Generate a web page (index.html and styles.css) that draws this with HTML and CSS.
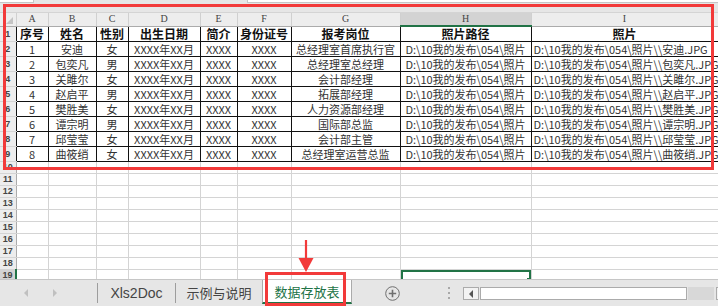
FILE: index.html
```html
<!DOCTYPE html>
<html lang="zh-CN">
<head>
  <meta charset="UTF-8">
  <meta name="viewport" content="width=device-width, initial-scale=1.0">
  <title>数据存放表</title>
  <link rel="stylesheet" href="styles.css">
</head>
<body>

  <div class="app">
    <div class="formula">
      <div class="name-box"></div>
      <div class="fx-box"></div>
    </div>

    <div class="sheet">
      <table class="grid" id="grid">
        <colgroup>
          <col class="w-rh"><col class="w-a"><col class="w-b"><col class="w-c"><col class="w-d">
          <col class="w-e"><col class="w-f"><col class="w-g"><col class="w-h"><col class="w-i">
        </colgroup>
        <tr class="col-head">
          <th class="corner"><span class="tri"></span></th>
          <th>A</th><th>B</th><th>C</th><th>D</th><th>E</th><th>F</th><th>G</th><th class="sel">H</th><th>I</th>
        </tr>
        <tr class="row-data head">
          <td class="rh">1</td>
          <td>序号</td><td>姓名</td><td>性别</td><td>出生日期</td><td>简介</td><td>身份证号</td><td>报考岗位</td><td>照片路径</td><td>照片</td>
        </tr>
        <tr class="row-data">
          <td class="rh">2</td>
          <td>1</td><td>安迪</td><td>女</td><td>XXXX年XX月</td><td>XXXX</td><td>XXXX</td><td>总经理室首席执行官</td>
          <td>D:\10我的发布\054\照片</td><td class="left">D:\10我的发布\054\照片\\安迪.JPG</td>
        </tr>
        <tr class="row-data">
          <td class="rh">3</td>
          <td>2</td><td>包奕凡</td><td>男</td><td>XXXX年XX月</td><td>XXXX</td><td>XXXX</td><td>总经理室总经理</td>
          <td>D:\10我的发布\054\照片</td><td class="left">D:\10我的发布\054\照片\\包奕凡.JPG</td>
        </tr>
        <tr class="row-data">
          <td class="rh">4</td>
          <td>3</td><td>关雎尔</td><td>女</td><td>XXXX年XX月</td><td>XXXX</td><td>XXXX</td><td>会计部经理</td>
          <td>D:\10我的发布\054\照片</td><td class="left">D:\10我的发布\054\照片\\关雎尔.JPG</td>
        </tr>
        <tr class="row-data">
          <td class="rh">5</td>
          <td>4</td><td>赵启平</td><td>男</td><td>XXXX年XX月</td><td>XXXX</td><td>XXXX</td><td>拓展部经理</td>
          <td>D:\10我的发布\054\照片</td><td class="left">D:\10我的发布\054\照片\\赵启平.JPG</td>
        </tr>
        <tr class="row-data">
          <td class="rh">6</td>
          <td>5</td><td>樊胜美</td><td>女</td><td>XXXX年XX月</td><td>XXXX</td><td>XXXX</td><td>人力资源部经理</td>
          <td>D:\10我的发布\054\照片</td><td class="left">D:\10我的发布\054\照片\\樊胜美.JPG</td>
        </tr>
        <tr class="row-data">
          <td class="rh">7</td>
          <td>6</td><td>谭宗明</td><td>男</td><td>XXXX年XX月</td><td>XXXX</td><td>XXXX</td><td>国际部总监</td>
          <td>D:\10我的发布\054\照片</td><td class="left">D:\10我的发布\054\照片\\谭宗明.JPG</td>
        </tr>
        <tr class="row-data">
          <td class="rh">8</td>
          <td>7</td><td>邱莹莹</td><td>女</td><td>XXXX年XX月</td><td>XXXX</td><td>XXXX</td><td>会计部主管</td>
          <td>D:\10我的发布\054\照片</td><td class="left">D:\10我的发布\054\照片\\邱莹莹.JPG</td>
        </tr>
        <tr class="row-data">
          <td class="rh">9</td>
          <td>8</td><td>曲筱绡</td><td>女</td><td>XXXX年XX月</td><td>XXXX</td><td>XXXX</td><td>总经理室运营总监</td>
          <td>D:\10我的发布\054\照片</td><td class="left">D:\10我的发布\054\照片\\曲筱绡.JPG</td>
        </tr>
      </table>
    </div>

    <div class="tabs">
      <div class="tab-nav">
        <span class="nav-prev"></span>
        <span class="nav-next"></span>
      </div>
      <div class="tab">Xls2Doc</div>
      <div class="tab cn">示例与说明</div>
      <div class="tab cn active">数据存放表</div>
      <div class="add-sheet">
        <svg width="15" height="15" viewBox="0 0 15 15">
          <circle cx="7.5" cy="7.5" r="6.8" fill="none" stroke="#6f6f6f" stroke-width="1"/>
          <path d="M7.5 3.8v7.4M3.8 7.5h7.4" stroke="#6f6f6f" stroke-width="1.6"/>
        </svg>
      </div>
      <div class="splitter"><i></i><i></i><i></i></div>
      <div class="hscroll">
        <div class="scroll-btn"><span class="tri-left"></span></div>
        <div class="scroll-thumb"></div>
        <div class="scroll-track"></div>
        <div class="scroll-btn"></div>
      </div>
    </div>

    <!-- annotations drawn over the screenshot -->
    <div class="mark mark-range"></div>
    <div class="mark mark-tab"></div>
    <svg class="arrow" width="18" height="36" viewBox="0 0 18 36">
      <path d="M9 2v20" stroke="#f23a3a" stroke-width="2.2"/>
      <path d="M1.5 20h15L9 34z" fill="#f23a3a"/>
    </svg>
  </div>

  <script>
    const grid = document.getElementById("grid");

    // blank rows 10 - 19, H19 is the active cell
    for (let r = 10; r <= 19; r++) {
      const tr = document.createElement("tr");
      tr.className = "row-empty";
      let html = '<td class="rh' + (r === 19 ? ' sel' : '') + '">' + r + '</td>';
      for (let c = 0; c < 9; c++) {
        if (r === 19 && c === 7) {
          html += '<td class="active-cell"><span class="handle"></span></td>';
        } else {
          html += '<td></td>';
        }
      }
      tr.innerHTML = html;
      grid.appendChild(tr);
    }
  </script>

</body>
</html>
```

FILE: styles.css
```css
* {
  box-sizing: border-box;
}

body {
  margin: 0;
  background-color: #ffffff;
  font-family: "Noto Sans CJK SC", sans-serif;
}

.app {
  position: relative;
  width: 718px;
  height: 306px;
  overflow: hidden;
  display: flex;
  flex-direction: column;
}

/* formula bar edge */
.formula {
  flex: none;
  height: 13px;
  display: flex;
  background-color: #e6e6e6;
  border-bottom: 1px solid #d4d4d4;
}

.name-box {
  width: 34px;
  height: 3px;
  background-color: #fff;
  border-right: 1px solid #c6c6c6;
  border-bottom: 1px solid #c6c6c6;
}

.fx-box {
  flex: 1;
  height: 3px;
  margin-left: 213px;
  background-color: #fff;
  border-left: 1px solid #c6c6c6;
  border-bottom: 1px solid #c6c6c6;
}

/* grid */
.sheet {
  flex: 1;
  overflow: hidden;
}

.grid {
  width: 718px;
  table-layout: fixed;
  border-collapse: collapse;
}

.w-rh { width: 16px; }
.w-a { width: 32px; }
.w-b { width: 48px; }
.w-c { width: 32px; }
.w-d { width: 72px; }
.w-e { width: 37px; }
.w-f { width: 54px; }
.w-g { width: 109px; }
.w-h { width: 131px; }
.w-i { width: 187px; }

.grid th,
.grid td {
  padding: 0;
  overflow: hidden;
  white-space: nowrap;
  text-align: center;
}

.col-head th {
  height: 13px;
  background-color: #ededed;
  border-right: 1px solid #d0d0d0;
  border-bottom: 1px solid #ababab;
  font-family: "Liberation Serif", serif;
  font-weight: normal;
  font-size: 10px;
  line-height: 12px;
  color: #444;
}

.col-head th.sel {
  background-color: #d3d3d3;
  border-bottom: 2px solid #217346;
}

.tri {
  display: block;
  width: 0;
  height: 0;
  margin: 2px 0 0 6px;
  border-left: 7px solid transparent;
  border-bottom: 7px solid #c4c4c4;
}

.rh {
  background-color: #ededed;
  border-bottom: 1px solid #d4d4d4;
  font-family: "Liberation Sans", sans-serif;
  font-weight: bold;
  font-size: 9px;
  color: #444;
}

.row-data td {
  height: 15px;
  font-size: 11px;
  line-height: 14px;
  color: #333;
  border: 1px solid #111;
}

.row-data td.rh {
  border: none;
  border-right: 1px solid #111;
  border-bottom: 1px solid #d4d4d4;
  font-size: 9px;
  color: #444;
}

.row-data.head td {
  font-size: 12px;
  font-weight: bold;
  color: #111;
}

.row-data.head td.rh {
  font-size: 9px;
  color: #444;
}

.row-data td.left {
  text-align: left;
  padding-left: 2px;
}

.row-empty td {
  height: 12px;
  border-right: 1px solid #d4d4d4;
  border-bottom: 1px solid #d4d4d4;
}

.row-empty td.rh {
  font-size: 9px;
  line-height: 11px;
  border-right: 1px solid #ababab;
}

.row-empty td.rh.sel {
  background-color: #d3d3d3;
  border-right: 2px solid #217346;
}

.active-cell {
  position: relative;
  box-shadow: inset 0 2px 0 #217346, inset 2px 0 0 #217346, inset -2px 0 0 #217346;
}

.handle {
  position: absolute;
  right: -1px;
  bottom: 0;
  width: 5px;
  height: 3px;
  background-color: #217346;
}

/* sheet tabs */
.tabs {
  flex: none;
  height: 27px;
  display: flex;
  align-items: flex-start;
  background-color: #e6e6e6;
  border-top: 1px solid #c6c6c6;
}

.tabs > div {
  flex: none;
}

.tab-nav {
  width: 97px;
  height: 26px;
  display: flex;
  align-items: center;
  padding-left: 24px;
  gap: 25px;
}

.nav-prev,
.nav-next {
  width: 0;
  height: 0;
  border-top: 4px solid transparent;
  border-bottom: 4px solid transparent;
}

.nav-prev {
  border-right: 4px solid #c0c0c0;
}

.nav-next {
  border-left: 4px solid #c0c0c0;
}

.tab {
  height: 20px;
  margin-top: 3px;
  border-left: 1px solid #9d9d9d;
  font-family: "Liberation Sans", sans-serif;
  font-size: 14px;
  line-height: 20px;
  color: #444;
}

.tab:nth-child(2) {
  width: 78px;
  text-align: center;
}

.tab.cn {
  width: 87px;
  text-align: center;
  font-family: "Noto Sans CJK SC", sans-serif;
  font-size: 13px;
}

.tab.active {
  width: 90px;
  height: 24px;
  margin-top: 0;
  line-height: 23px;
  background-color: #fff;
  color: #217346;
  border-left: 1px solid #ababab;
  border-right: 1px solid #ababab;
  border-bottom: 2px solid #217346;
}

.add-sheet {
  width: 96px;
  height: 26px;
  display: flex;
  align-items: center;
  padding-left: 33px;
}

.add-sheet svg {
  display: block;
}

.splitter {
  width: 15px;
  height: 26px;
  display: flex;
  flex-direction: column;
  justify-content: center;
  gap: 3px;
}

.splitter i {
  display: block;
  width: 2px;
  height: 2px;
  background-color: #a8a8a8;
}

.tabs > .hscroll {
  flex: 1;
  min-width: 0;
  height: 13px;
  margin-top: 7px;
  display: flex;
  overflow: hidden;
}

.hscroll > div {
  flex: none;
}

.scroll-btn {
  width: 16px;
  height: 13px;
  border: 1px solid #ababab;
  background-color: #f3f3f3;
  display: flex;
  align-items: center;
  justify-content: center;
}

.tri-left {
  width: 0;
  height: 0;
  border-top: 4px solid transparent;
  border-bottom: 4px solid transparent;
  border-right: 4px solid #555;
}

.scroll-thumb {
  width: 207px;
  height: 13px;
  margin-left: 1px;
  background-color: #fff;
  border: 1px solid #ababab;
}

.scroll-track {
  width: 26px;
  height: 13px;
  margin: 0 2px 0 1px;
  background-color: #d8d8d8;
}

/* red highlight marks */
.mark {
  position: absolute;
  border: 3px solid #f23a3a;
}

.mark-range {
  left: 3px;
  top: 4px;
  width: 711px;
  height: 166px;
}

.mark-tab {
  left: 265px;
  top: 272px;
  width: 81px;
  height: 34px;
}

.arrow {
  position: absolute;
  left: 297px;
  top: 238px;
}
```
